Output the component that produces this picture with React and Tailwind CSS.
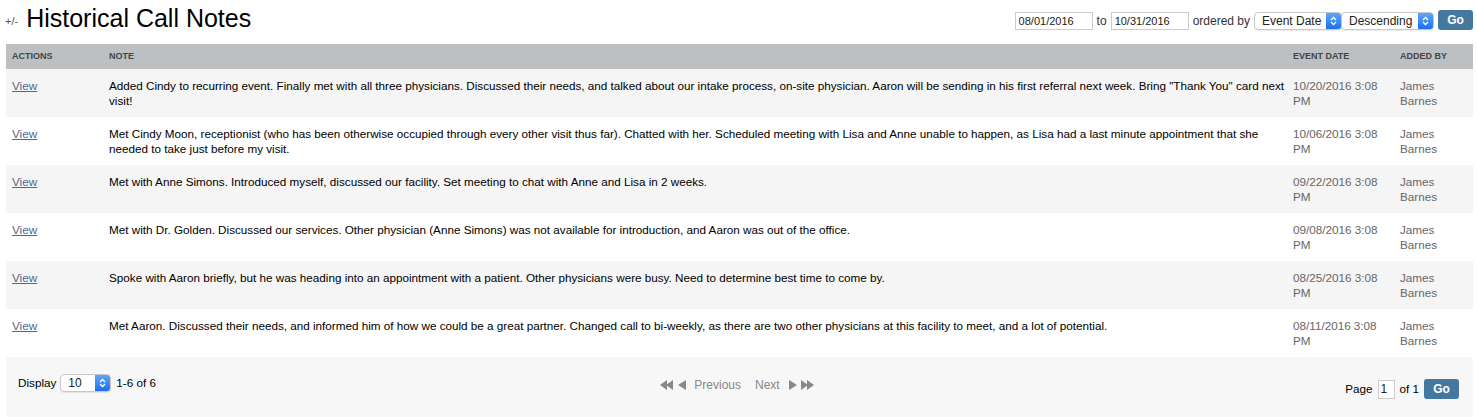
import { useState } from 'react';

const notes = [
  {
    note: 'Added Cindy to recurring event. Finally met with all three physicians. Discussed their needs, and talked about our intake process, on-site physician. Aaron will be sending in his first referral next week. Bring "Thank You" card next visit!',
    date: '10/20/2016 3:08 PM',
  },
  {
    note: 'Met Cindy Moon, receptionist (who has been otherwise occupied through every other visit thus far). Chatted with her. Scheduled meeting with Lisa and Anne unable to happen, as Lisa had a last minute appointment that she needed to take just before my visit.',
    date: '10/06/2016 3:08 PM',
  },
  {
    note: 'Met with Anne Simons. Introduced myself, discussed our facility. Set meeting to chat with Anne and Lisa in 2 weeks.',
    date: '09/22/2016 3:08 PM',
  },
  {
    note: 'Met with Dr. Golden. Discussed our services. Other physician (Anne Simons) was not available for introduction, and Aaron was out of the office.',
    date: '09/08/2016 3:08 PM',
  },
  {
    note: 'Spoke with Aaron briefly, but he was heading into an appointment with a patient. Other physicians were busy. Need to determine best time to come by.',
    date: '08/25/2016 3:08 PM',
  },
  {
    note: 'Met Aaron. Discussed their needs, and informed him of how we could be a great partner. Changed call to bi-weekly, as there are two other physicians at this facility to meet, and a lot of potential.',
    date: '08/11/2016 3:08 PM',
  },
];

const Select = ({ value, width }) => (
  <div className={`flex h-[18px] items-stretch rounded-[4px] border border-[#c8c8c8] bg-white shadow-[0_1px_1px_rgba(0,0,0,0.08)] ${width}`}>
    <span className="flex-1 pl-[7px] text-[12px] leading-[16px] text-[#222]">{value}</span>
    <span className="flex w-[15px] items-center justify-center rounded-r-[3px] bg-gradient-to-b from-[#5ea6f8] to-[#1a6ff0]">
      <svg width="7" height="10" viewBox="0 0 7 10" fill="none" stroke="white" strokeWidth="1.3">
        <path d="M1 4 L3.5 1.5 L6 4" />
        <path d="M1 6 L3.5 8.5 L6 6" />
      </svg>
    </span>
  </div>
);

const GoButton = () => (
  <button className="h-[20px] w-[35px] rounded-[3px] bg-[#45789f] text-[12px] font-bold text-white">Go</button>
);

const Arrow = ({ dir, double }) => (
  <svg width={double ? 14 : 8} height="10" viewBox={double ? '0 0 14 10' : '0 0 8 10'} fill="#888">
    {dir === 'left' ? (
      double ? (
        <>
          <path d="M0 5 L7 0 L7 10 Z" />
          <path d="M6 5 L13 0 L13 10 Z" />
        </>
      ) : (
        <path d="M0 5 L8 0 L8 10 Z" />
      )
    ) : double ? (
      <>
        <path d="M0 0 L7 5 L0 10 Z" />
        <path d="M6 0 L13 5 L6 10 Z" />
      </>
    ) : (
      <path d="M0 0 L8 5 L0 10 Z" />
    )}
  </svg>
);

export default function App() {
  const [from, setFrom] = useState('08/01/2016');
  const [to, setTo] = useState('10/31/2016');
  const [page, setPage] = useState('1');

  return (
    <div className="min-h-[419px] bg-white font-['Liberation_Sans',Arial,sans-serif] text-[11.7px] text-[#222]">
      {/* ── Title bar ── */}
      <div className="flex h-[44px] items-start justify-between pl-[5px] pr-[4px]">
        <div className="flex items-end pt-[3px]">
          <span className="mb-[4px] mr-[8px] text-[11px] text-[#555]">+/-</span>
          <h1 className="text-[25px] leading-[30px] text-black">Historical Call Notes</h1>
        </div>
        <div className="flex items-center gap-[4px] pt-[11px]">
          <input
            value={from}
            onChange={(e) => setFrom(e.target.value)}
            className="h-[18px] w-[78px] border border-[#ccc] px-[3px] text-[11px] text-[#222] outline-none"
          />
          <span className="text-[12px] text-[#333]">to</span>
          <input
            value={to}
            onChange={(e) => setTo(e.target.value)}
            className="h-[18px] w-[78px] border border-[#ccc] px-[3px] text-[11px] text-[#222] outline-none"
          />
          <span className="text-[12px] text-[#333]">ordered by</span>
          <Select value="Event Date" width="w-[88px]" />
          <div className="-ml-[5px]">
            <Select value="Descending" width="w-[93px]" />
          </div>
          <div className="-mt-[1px]">
            <GoButton />
          </div>
        </div>
      </div>

      {/* ── Table ── */}
      <div className="mx-[6px] w-[1467px]">
        <div className="grid h-[25px] grid-cols-[97px_1184px_107px_79px] items-center bg-[#bcc0c3] text-[9px] font-bold uppercase text-[#444]">
          <div className="px-[6px]">Actions</div>
          <div className="px-[6px]">Note</div>
          <div className="px-[6px]">Event Date</div>
          <div className="px-[6px]">Added By</div>
        </div>
        {notes.map((row, i) => (
          <div
            key={row.date}
            className={`grid h-[48px] grid-cols-[97px_1184px_107px_79px] items-start pt-[9px] leading-[15px] ${
              i % 2 === 0 ? 'bg-[#f5f5f5]' : 'bg-white'
            }`}
          >
            <div className="px-[6px]">
              <a href="#" className="text-[#4a6a8f] underline">View</a>
            </div>
            <div className="pl-[6px] text-black">{row.note}</div>
            <div className="px-[6px] text-[#666]">{row.date}</div>
            <div className="px-[6px] text-[#666]">James Barnes</div>
          </div>
        ))}

        {/* ── Footer ── */}
        <div className="grid h-[60px] grid-cols-3 items-start bg-[#f7f7f7] px-[12px]">
          <div className="flex items-center gap-[4px] pt-[17px]">
            <span className="text-black">Display</span>
            <Select value="10" width="w-[51px]" />
            <span className="ml-[1px] text-black">1-6 of 6</span>
          </div>
          <div className="flex items-center justify-center pt-[19px] pr-[4px] text-[12px] text-[#888]">
            <Arrow dir="left" double />
            <span className="ml-[4px]"><Arrow dir="left" /></span>
            <span className="ml-[8px]">Previous</span>
            <span className="ml-[14px]">Next</span>
            <span className="ml-[9px]"><Arrow dir="right" /></span>
            <span className="ml-[4px]"><Arrow dir="right" double /></span>
          </div>
          <div className="flex items-center justify-end gap-[5px] pt-[22px] pr-[2px]">
            <span className="text-black">Page</span>
            <input
              value={page}
              onChange={(e) => setPage(e.target.value)}
              className="h-[19px] w-[17px] border border-[#ccc] bg-white px-[2px] text-[12px] outline-none"
            />
            <span className="text-black">of 1</span>
            <GoButton />
          </div>
        </div>
      </div>
    </div>
  );
}
